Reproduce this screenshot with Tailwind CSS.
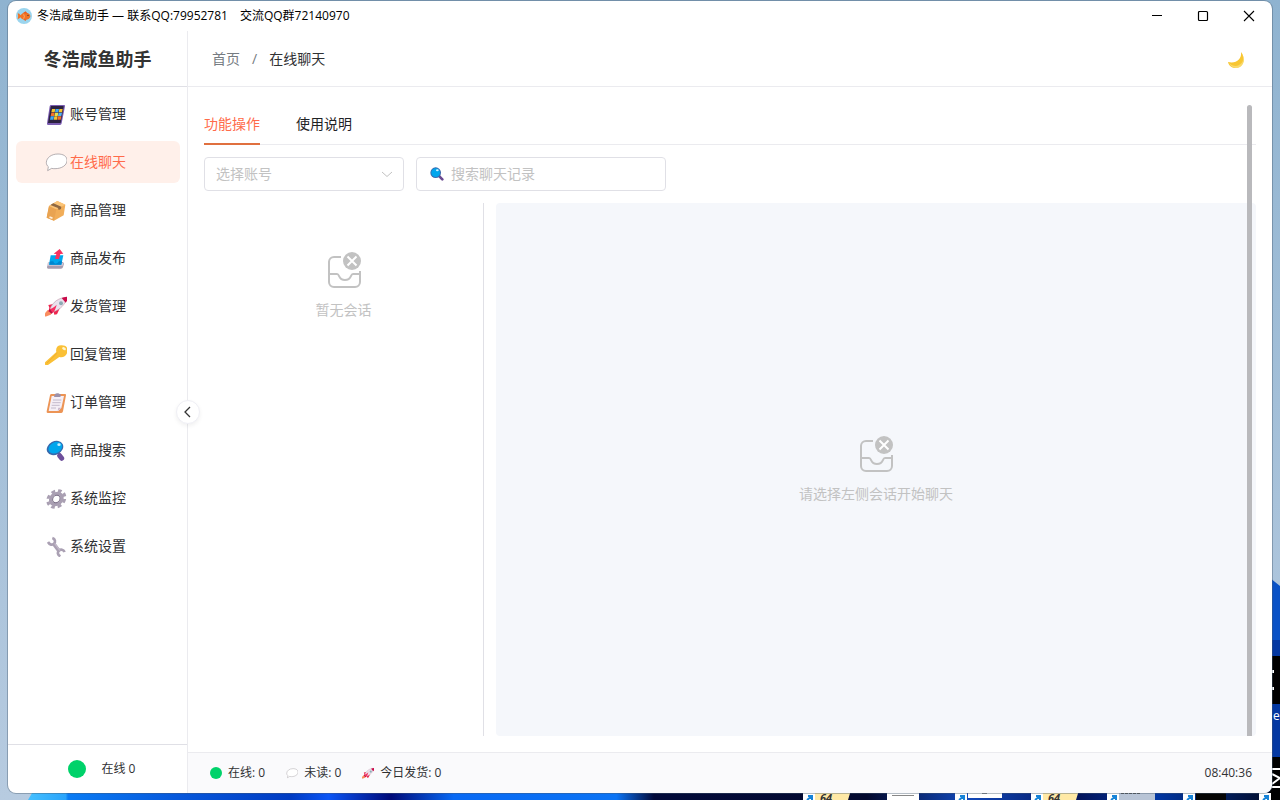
<!DOCTYPE html>
<html lang="zh-CN">
  <head>
    <meta charset="UTF-8" />
    <meta name="viewport" content="width=device-width, initial-scale=1.0" />
    <title>冬浩咸鱼助手</title>
    <script src="https://cdn.jsdelivr.net/npm/@tailwindcss/browser@4"></script>
  </head>
  <body class="relative h-screen overflow-hidden bg-[#94b7d3] font-['Open_Sans','Noto_Sans_CJK_SC',sans-serif] text-[#303133]">
    <!-- icons -->
    <svg class="hidden">
      <symbol id="phone" viewBox="0 0 66 66">
        <path d="M18 6h39q4 0 3 4L50 61q-1 5-5 5H9q-4 0-3-5L14 10q1-4 4-4z" fill="#7a5cb0" />
        <path d="M19 9h35q3 0 2 3l-9 48H9l8-48q1-3 2-3z" fill="#2b2140" />
        <path d="M21 18h10l-2 10H19zM43 18h10l-2 10H41zM28 40h10l-2 10H26z" fill="#f4c42f" />
        <path d="M32 18h10l-2 10H30zM17 40h10l-2 10H15z" fill="#3fa9f0" />
        <path d="M19 29h10l-2 10H17zM39 40h10l-2 10H37z" fill="#f3702d" />
        <path d="M30 29h10l-2 10H28z" fill="#eadf4a" />
        <path d="M41 29h10l-2 10H39z" fill="#4fb4f4" />
      </symbol>
      <symbol id="chat" viewBox="0 0 66 66">
        <path d="M39 9C19 9 5 20 4 34c0 6 2 10 6 13L8 59l12-7c3 1 6 1 10 1 20 0 36-10 36-25C66 16 55 9 39 9z" fill="#fff" stroke="#908b91" stroke-width="2" stroke-linejoin="round" />
      </symbol>
      <symbol id="box" viewBox="0 0 66 66">
        <path d="M12 21L37 6l24 11-5 32-29 16-22-9z" fill="#f1ad58" />
        <path d="M12 21l22 10-7 34-22-9z" fill="#e9a351" />
        <path d="M12 21L37 6l24 11-27 14z" fill="#fbc477" />
        <path d="M16 18l9-5 24 10-1 7-7 3-2-6z" fill="#8e6843" />
        <path d="M14 52l9 3-1 5-9-3z" fill="#fff0dc" />
      </symbol>
      <symbol id="outbox" viewBox="0 0 66 66">
        <path d="M11 45h43l3 5-3 10q-1 5-6 5H10q-5 0-4-5z" fill="#a79caf" />
        <path d="M8 47h47l-2 9H7z" fill="#d3cad8" />
        <path d="M17 25h38l-6 28H12z" fill="#00a6ed" />
        <path d="M16 43h9q1 7 7 7t10-7h9l-2 10H13z" fill="#0086cf" />
        <path d="M30 36l4-15-8-1L44 6l11 14-9 1-4 15z" fill="#f8325f" />
      </symbol>
      <symbol id="rocket" viewBox="0 0 66 66">
        <path d="M8 45L-1 56l2 9 16-6 6-9z" fill="#f98d5f" />
        <path d="M10 30l15-3 4 15-19 8 3-12zM45 38l-9 20-8 1-3-14z" fill="#ee264f" />
        <path d="M15 42C22 22 42 7 65 7c-2 20-20 38-41 44z" fill="#e9e2ed" stroke="#b88698" stroke-width="1.5" />
        <path d="M50 9q8-4 19-4 0 10-7 18z" fill="#ca0b4a" />
        <path d="M14 43q16-8 21-14-4 17-11 24z" fill="#f92f60" />
        <path d="M14 42l10 11-5 3-8-8z" fill="#c20c47" />
        <circle cx="48" cy="25" r="6" fill="#8caab4" />
      </symbol>
      <symbol id="key" viewBox="0 0 66 66">
        <path d="M50 7C38 6 31 15 34 27L1 57q-4 5 0 9 4 3 9-1l33-23c12 4 24-5 25-19C69 13 61 7 50 7z" fill="#fac036" />
        <path d="M37 30L5 61" stroke="#eba42c" stroke-width="2" />
        <ellipse cx="57" cy="17" rx="6" ry="4" transform="rotate(30 57 17)" fill="#fff5cf" />
      </symbol>
      <symbol id="clipboard" viewBox="0 0 66 66">
        <path d="M19 9h41q4 0 3 4L54 61q-1 5-5 5H8q-4 0-3-5l10-48q1-4 4-4z" fill="#ec9455" />
        <path d="M20 15h37l-8 36-9 9H11z" fill="#f5eff6" />
        <path d="M49 50H40l-2 10z" fill="#c9b6cc" />
        <path d="M24 27h25M22 35h25M20 43h24M18 51h15" stroke="#aaa0b6" stroke-width="2" />
        <path d="M29 11q3-5 11-4l8 4-2 7H27z" fill="#9c91aa" />
      </symbol>
      <symbol id="lens" viewBox="0 0 66 66">
        <path d="M37 38l11 14" stroke="#5f5b83" stroke-width="7" />
        <path d="M44 50l6 8" stroke="#6e4f9b" stroke-width="15" stroke-linecap="round" />
        <ellipse cx="30" cy="27" rx="26" ry="20" transform="rotate(-28 30 27)" fill="#3769ad" />
        <ellipse cx="31" cy="26" rx="22" ry="16" transform="rotate(-28 31 26)" fill="#00a6ed" />
        <ellipse cx="42" cy="17" rx="5" ry="4" fill="#c7eefe" />
      </symbol>
      <symbol id="search" viewBox="0 0 42 42">
        <path d="M26 26l11 11" stroke="#6a4a91" stroke-width="8" stroke-linecap="round" />
        <circle cx="17" cy="17" r="16" fill="#3769ad" />
        <circle cx="17" cy="17" r="13" fill="#00a6ed" />
        <ellipse cx="22" cy="10" rx="4" ry="3" fill="#d0f0ff" />
      </symbol>
      <symbol id="gear" viewBox="0 0 66 66">
        <g transform="translate(34 36) skewX(-10)" fill="none" stroke="#a99fb2">
          <circle r="25" stroke-width="9" stroke-dasharray="11 8.63" />
          <circle r="17" stroke-width="10" />
          <circle r="11" stroke="#796d85" stroke-width="3" />
        </g>
      </symbol>
      <symbol id="wrench" viewBox="0 0 66 66">
        <g fill="none" stroke="#aaa0b3">
          <path d="M22 9c9 3 10 12 5 17s-13 4-18-5" stroke-width="8" />
          <path d="M59 51c-4-8-12-9-17-4s-5 12 4 17" stroke-width="8" />
          <path d="M25 25l18 24" stroke-width="11" />
          <path d="M29 25l16 22" stroke="#c3bac9" stroke-width="4" />
        </g>
      </symbol>
      <symbol id="inbox" viewBox="-1 -1 36 38">
        <g fill="none" stroke="#c2c2c2" stroke-width="2">
          <path d="M14 5H7a5 5 0 0 0-5 5v20a5 5 0 0 0 5 5h21a5 5 0 0 0 5-5V19" />
          <path d="M2 22h8c3 0 1 6 8 6s5-6 8-6h7" />
        </g>
        <circle cx="25" cy="9" r="9" fill="#c2c2c2" />
        <path d="M20.500 4.500l9 9M29.500 4.500l-9 9" stroke="#fff" stroke-width="2" />
      </symbol>
    </svg>

    <!-- desktop wallpaper -->
    <svg class="absolute inset-0 h-full w-full" viewBox="0 0 1280 800" preserveAspectRatio="none" aria-hidden="true">
      <defs>
        <linearGradient id="sky" x2="0" y2="1">
          <stop stop-color="#8fb3d0" />
          <stop offset="1" stop-color="#b7cbe0" />
        </linearGradient>
        <linearGradient id="bloom">
          <stop stop-color="#45c0ff" />
          <stop offset=".03" stop-color="#2aa4fb" />
          <stop offset=".032" stop-color="#0a7cf4" />
          <stop offset=".12" stop-color="#0758db" />
          <stop offset=".21" stop-color="#003bc2" />
          <stop offset=".24" stop-color="#0b55f5" />
          <stop offset=".29" stop-color="#000a78" />
          <stop offset=".34" stop-color="#0869f4" />
          <stop offset=".47" stop-color="#0b73f4" />
          <stop offset=".5" stop-color="#020a3a" />
          <stop offset=".67" stop-color="#03092e" />
          <stop offset=".75" stop-color="#1148ba" />
          <stop offset=".84" stop-color="#03145c" />
          <stop offset=".9" stop-color="#0237a4" />
          <stop offset="1" stop-color="#020820" />
        </linearGradient>
      </defs>
      <path d="M0 0h1280v800H0z" fill="url(#sky)" />
      <path d="M36 786h1244v14H28z" fill="url(#bloom)" />
      <path d="M1270 578l10 8v80h-10z" fill="#0851c6" />
      <path d="M1270 640h10v160h-10z" fill="#0438a2" />
      <path d="M1270 656h10v48h-10zM1270 757h10v43h-10z" fill="#000" />
      <path d="M1270 670h4v3h-4zM1270 687h4v3h-4z" fill="#fff" />
      <path d="M1272 769h8M1272 774l8 4-8 6M1272 787h8" fill="none" stroke="#fff" stroke-width="2" />
      <text x="1273" y="720" font-size="12" fill="#fff">e</text>
      <path d="M815 790h36l-3 10h-33zM1043 790h36l-3 10h-33z" fill="#ffe9a6" />
      <path d="M887 790h32v10h-32zM968 790h34v8h-34z" fill="#fff" />
      <path d="M892 795.500h22M982 793.500h5" stroke="#888" />
      <path d="M1119 790h36v10h-36z" fill="#b8c4d6" />
      <path d="M1121 793.500h20" stroke="#555" stroke-dasharray="3 1" />
      <path d="M1196 790h30v10h-30z" fill="#050505" />
      <g font-size="11" font-weight="bold" font-style="italic" fill="#333">
        <text x="820" y="802">64</text>
        <text x="1048" y="802">64</text>
      </g>
      <path d="M803 793h12v7h-12zM955 793h12v7h-12zM1031 793h12v7h-12zM1107 793h12v7h-12zM1183 793h12v7h-12zM1259 793h12v7h-12z" fill="#fff" />
      <path d="M807 800l5-4m-4 0h4v4M959 800l5-4m-4 0h4v4M1035 800l5-4m-4 0h4v4M1111 800l5-4m-4 0h4v4M1187 800l5-4m-4 0h4v4M1263 800l5-4m-4 0h4v4" fill="none" stroke="#1683d8" stroke-width="2" />
    </svg>

    <div class="relative h-full px-2 pt-px pb-[7px]">
      <div class="flex h-full flex-col overflow-hidden rounded-lg bg-white shadow-[0_0_0_1px_rgba(70,90,110,0.4)]">
        <!-- title bar -->
        <div class="flex h-[30px] shrink-0 items-center pl-2 text-xs text-black">
          <svg class="mr-[5px] h-4 w-4" viewBox="0 0 48 48">
            <circle cx="24" cy="24" r="24" fill="#9bd5ee" />
            <path d="M5 16q6 0 8 6 8-10 18-8c8 1 13 6 12 12-2 7-9 10-17 9-6 0-10-3-13-7q-3 5-8 5 3-9 0-17z" fill="#f17425" />
            <path d="M21 15l8-5 6 7zM22 34l6 5 4-5z" fill="#e85c1c" />
            <path d="M23 19q4 6 0 13" stroke="#ffc68f" stroke-width="2" fill="none" />
            <circle cx="36" cy="22" r="2" fill="#333" />
          </svg>
          <div class="flex gap-3">
            <span>冬浩咸鱼助手 — 联系QQ:79952781</span>
            <span>交流QQ群72140970</span>
          </div>
          <div class="ml-auto flex h-full">
            <button class="flex w-[46px] items-center justify-center" aria-label="最小化">
              <svg class="h-3 w-3" viewBox="0 0 12 12"><path d="M1 5.500h10" stroke="#000" /></svg>
            </button>
            <button class="flex w-[46px] items-center justify-center" aria-label="最大化">
              <svg class="h-3 w-3" viewBox="0 0 12 12"><rect x="1.5" y="1.5" width="9" height="9" rx="1" fill="none" stroke="#000" stroke-width="1.2" /></svg>
            </button>
            <button class="flex w-[46px] items-center justify-center" aria-label="关闭">
              <svg class="h-3 w-3" viewBox="0 0 12 12"><path d="M1 1l10 10M11 1L1 11" stroke="#000" stroke-width="1.1" /></svg>
            </button>
          </div>
        </div>

        <div class="flex min-h-0 flex-1">
          <!-- sidebar -->
          <aside class="relative flex w-[180px] shrink-0 flex-col border-r border-[#ebebef]">
            <h1 class="flex h-14 shrink-0 items-center justify-center border-b border-[#e0e0e6] text-lg font-bold text-[#333]">冬浩咸鱼助手</h1>
            <nav class="flex flex-1 flex-col gap-1.5 pt-1.5 pr-[7px] pl-2 text-sm">
              <a href="#" class="flex h-[42px] shrink-0 items-center gap-[3px] rounded-md pl-[29px]"><svg class="h-[22px] w-[22px] overflow-visible"><use href="#phone" /></svg>账号管理</a>
              <a href="#" class="flex h-[42px] shrink-0 items-center gap-[3px] rounded-md bg-[#fff0ea] pl-[29px] text-[#ff6b4a]"><svg class="h-[22px] w-[22px] overflow-visible"><use href="#chat" /></svg>在线聊天</a>
              <a href="#" class="flex h-[42px] shrink-0 items-center gap-[3px] rounded-md pl-[29px]"><svg class="h-[22px] w-[22px] overflow-visible"><use href="#box" /></svg>商品管理</a>
              <a href="#" class="flex h-[42px] shrink-0 items-center gap-[3px] rounded-md pl-[29px]"><svg class="h-[22px] w-[22px] overflow-visible"><use href="#outbox" /></svg>商品发布</a>
              <a href="#" class="flex h-[42px] shrink-0 items-center gap-[3px] rounded-md pl-[29px]"><svg class="h-[22px] w-[22px] overflow-visible"><use href="#rocket" /></svg>发货管理</a>
              <a href="#" class="flex h-[42px] shrink-0 items-center gap-[3px] rounded-md pl-[29px]"><svg class="h-[22px] w-[22px] overflow-visible"><use href="#key" /></svg>回复管理</a>
              <a href="#" class="flex h-[42px] shrink-0 items-center gap-[3px] rounded-md pl-[29px]"><svg class="h-[22px] w-[22px] overflow-visible"><use href="#clipboard" /></svg>订单管理</a>
              <a href="#" class="flex h-[42px] shrink-0 items-center gap-[3px] rounded-md pl-[29px]"><svg class="h-[22px] w-[22px] overflow-visible"><use href="#lens" /></svg>商品搜索</a>
              <a href="#" class="flex h-[42px] shrink-0 items-center gap-[3px] rounded-md pl-[29px]"><svg class="h-[22px] w-[22px] overflow-visible"><use href="#gear" /></svg>系统监控</a>
              <a href="#" class="flex h-[42px] shrink-0 items-center gap-[3px] rounded-md pl-[29px]"><svg class="h-[22px] w-[22px] overflow-visible"><use href="#wrench" /></svg>系统设置</a>
            </nav>
            <div class="flex h-[49px] shrink-0 items-center justify-center gap-4 border-t border-[#e0e0e6] pl-2 text-xs">
              <span class="h-[18px] w-[18px] rounded-full bg-[#00d26a]"></span>
              <span>在线 0</span>
            </div>
            <button class="absolute top-1/2 -right-[13px] z-10 flex h-6 w-6 -translate-y-1/2 items-center justify-center rounded-full border border-[#efeff5] bg-white shadow-[0_2px_4px_rgba(0,0,0,0.06)]" aria-label="收起菜单">
              <svg class="h-3 w-3" viewBox="0 0 12 12"><path d="M8 1L3 6l5 5" fill="none" stroke="#333" stroke-width="1.3" /></svg>
            </button>
          </aside>

          <div class="flex min-w-0 flex-1 flex-col">
            <header class="flex h-14 shrink-0 items-center border-b border-[#ebebef] pr-[26px] pl-6 text-sm">
              <nav class="flex items-center">
                <a href="#" class="text-[#767c82]">首页</a>
                <span class="mx-3 text-[#767c82]">/</span>
                <span>在线聊天</span>
              </nav>
              <button class="ml-auto" aria-label="深色模式">
                <svg class="h-5 w-5" viewBox="0 0 20 20">
                  <path d="M15 3c5 6 3 15-5 16-4 0-7-2-8-6 8 2 14-3 13-10z" fill="#f8c632" />
                  <path d="M16 5c3 6 0 11-6 12-3 0-5-1-7-3 2 4 5 5 8 5 6-1 9-7 5-14z" fill="#f9da6c" />
                </svg>
              </button>
            </header>

            <main class="relative flex min-h-0 flex-1 flex-col p-4">
              <div class="flex h-[42px] shrink-0 gap-9 border-b border-[#ebebef] text-sm" role="tablist">
                <button role="tab" aria-selected="true" class="-mb-px border-b-2 border-[#e0703f] pt-px text-[#ff6b4a]">功能操作</button>
                <button role="tab" aria-selected="false" class="-mb-px border-b-2 border-transparent pt-px text-[#1f2225]">使用说明</button>
              </div>

              <div class="mt-3 flex shrink-0 gap-3 text-sm">
                <div class="relative">
                  <select class="h-[34px] w-[200px] appearance-none rounded-[4px] border border-[#e0e0e6] bg-white pl-[11px] text-[#c2c2c2]" aria-label="选择账号">
                    <option>选择账号</option>
                  </select>
                  <svg class="pointer-events-none absolute top-[11px] right-[11px] h-3 w-3" viewBox="0 0 12 12"><path d="M1 4l5 4.500L11 4" fill="none" stroke="#c2c2c2" /></svg>
                </div>
                <label class="flex h-[34px] w-[250px] items-center gap-[7px] rounded-[4px] border border-[#e0e0e6] px-[13px]">
                  <svg class="h-[14px] w-[14px] shrink-0"><use href="#search" /></svg>
                  <input type="text" class="w-full min-w-0 outline-none placeholder:text-[#c2c2c2]" placeholder="搜索聊天记录" aria-label="搜索聊天记录" />
                </label>
              </div>

              <div class="mt-3 flex min-h-0 flex-1 gap-3 text-sm text-[#c2c2c2]">
                <section class="flex w-[280px] shrink-0 flex-col items-center gap-[11px] border-r border-[#e0e0e6] pt-12">
                  <svg class="h-[38px] w-9"><use href="#inbox" /></svg>
                  <p>暂无会话</p>
                </section>
                <section class="flex flex-1 flex-col items-center justify-center gap-[11px] rounded-[4px] bg-[#f5f7fb]">
                  <svg class="h-[38px] w-9"><use href="#inbox" /></svg>
                  <p>请选择左侧会话开始聊天</p>
                </section>
              </div>

              <!-- scroll thumb -->
              <div class="absolute top-[18px] right-5 bottom-4 w-[5px] rounded-t-full bg-[#b9b9bc]"></div>
            </main>

            <footer class="flex h-[41px] shrink-0 items-center gap-[21px] border-t border-[#ebebef] bg-[#fafafc] pr-5 pl-[22px] text-xs">
              <span class="flex items-center gap-1.5"><i class="h-3 w-3 rounded-full bg-[#00d26a]"></i>在线: 0</span>
              <span class="flex items-center gap-1.5"><svg class="h-3 w-3 overflow-visible"><use href="#chat" /></svg>未读: 0</span>
              <span class="flex items-center gap-1.5"><svg class="h-3 w-3 overflow-visible"><use href="#rocket" /></svg>今日发货: 0</span>
              <time class="ml-auto">08:40:36</time>
            </footer>
          </div>
        </div>
      </div>
    </div>
  </body>
</html>
